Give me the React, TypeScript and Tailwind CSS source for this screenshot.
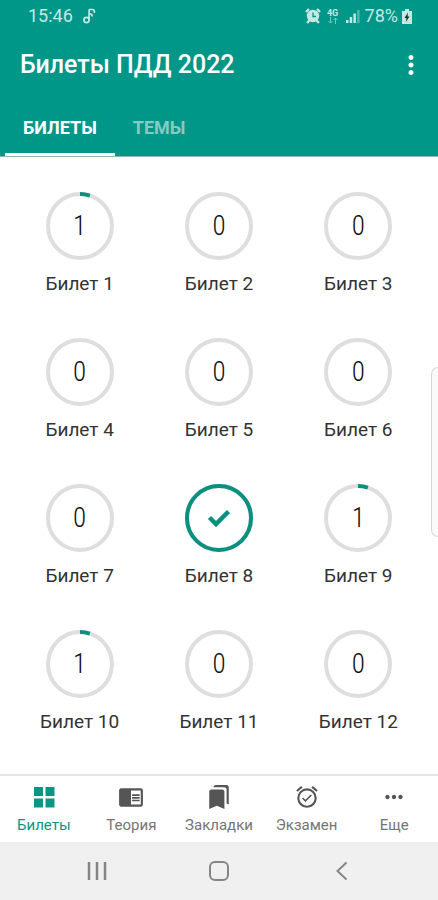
import React, { useState } from 'react';
import {
  MdBookmarks,
  MdChromeReaderMode,
  MdMoreHoriz,
  MdMoreVert,
  MdOutlineAlarmOn,
} from 'react-icons/md';

interface Ticket {
  id: number;
  answered: number;
  done?: boolean;
}

const QUESTIONS_PER_TICKET = 20;

const tickets: Ticket[] = [
  { id: 1, answered: 1 },
  { id: 2, answered: 0 },
  { id: 3, answered: 0 },
  { id: 4, answered: 0 },
  { id: 5, answered: 0 },
  { id: 6, answered: 0 },
  { id: 7, answered: 0 },
  { id: 8, answered: 20, done: true },
  { id: 9, answered: 1 },
  { id: 10, answered: 1 },
  { id: 11, answered: 0 },
  { id: 12, answered: 0 },
];

const GridIcon = () => (
  <svg viewBox="0 0 26 26" className="size-[26px]" fill="currentColor" aria-hidden="true">
    <path d="M3 3h9v9H3zM14.500 3h9v9h-9zM3 14.500h9v9H3zM14.500 14.500h9v9h-9z" />
  </svg>
);

const CheckIcon = () => (
  <svg viewBox="0 0 24 24" className="size-6" fill="none" stroke="#0b8f7e" strokeWidth="4.500" aria-hidden="true">
    <path d="M2.500 11.500l6.500 6.500L21.500 5.500" />
  </svg>
);

const navItems = [
  { label: 'Билеты', icon: <GridIcon /> },
  { label: 'Теория', icon: <MdChromeReaderMode size={26} /> },
  { label: 'Закладки', icon: <MdBookmarks size={26} /> },
  { label: 'Экзамен', icon: <MdOutlineAlarmOn size={26} /> },
  { label: 'Еще', icon: <MdMoreHoriz size={26} /> },
];

const StatusBar = () => (
  <div className="flex h-8 items-center justify-between pl-7 pr-[26px] text-lg leading-8 text-[#c5e8e3]">
    <div className="flex items-center gap-2.5">
      <span>15:46</span>
      <svg viewBox="0 0 14 16" className="h-4 w-3.5" fill="none" stroke="currentColor" strokeWidth="1.700" aria-hidden="true">
        <circle cx="3.500" cy="12" r="2.600" />
        <path d="M6.100 12V1.500M6.100 1.500h3.500c1.500 0 2.200 1.500 1.600 3.500M6.100 5.500c1.600 0 3 1 3.400 3" />
      </svg>
    </div>
    <div className="flex items-center gap-1">
      <svg viewBox="0 0 16 16" className="size-4" aria-hidden="true">
        <path d="M1 4l3-3M15 4l-3-3M2 15l3-3M14 15l-3-3" stroke="currentColor" strokeWidth="2.400" />
        <circle cx="8" cy="8" r="6.200" fill="currentColor" />
        <path d="M8 4.500V8.500h3" fill="none" stroke="#009688" strokeWidth="1.300" />
      </svg>
      <span className="flex w-4 flex-col items-center text-[9px] font-bold leading-[8px]">
        4G
        <svg viewBox="0 0 12 7" className="h-[7px] w-3 opacity-60" fill="none" stroke="currentColor" aria-hidden="true">
          <path d="M3.500 0v6M1.500 4l2 2 2-2M8.500 7V1M6.500 3l2-2 2 2" />
        </svg>
      </span>
      <svg viewBox="0 0 16 16" className="size-4" fill="currentColor" aria-hidden="true">
        <path d="M1 12h2.500v3H1zM4.700 9h2.500v6H4.700zM8.400 5.500h2.500V15H8.400z" />
        <path d="M12.100 2h2.500v13h-2.500z" opacity=".4" />
      </svg>
      <span>78%</span>
      <svg viewBox="0 0 10 15" className="h-[15px] w-2.5" aria-hidden="true">
        <path d="M3 0h4v2h3v13H0V2h3z" fill="currentColor" />
        <path d="M6 3.500L2.500 9h2l-.700 4L7.500 7.500h-2z" fill="#12312e" />
      </svg>
    </div>
  </div>
);

const TicketRing: React.FC<{ ticket: Ticket }> = ({ ticket }) => {
  const share = (ticket.answered / QUESTIONS_PER_TICKET) * 100;

  return (
    <span className="grid size-[68px] place-items-center">
      <svg viewBox="0 0 68 68" className="col-start-1 row-start-1 size-full -rotate-90" fill="none" strokeWidth="4" aria-hidden="true">
        <circle cx="34" cy="34" r="32" stroke="#dedede" />
        {share > 0 && (
          <circle cx="34" cy="34" r="32" stroke="#0b8f7e" pathLength={100} strokeDasharray={`${share} 100`} />
        )}
      </svg>
      <span className="col-start-1 row-start-1 font-['Roboto_Condensed','Liberation_Sans_Narrow',Roboto,sans-serif] text-[27px] font-light leading-8 text-[#111]">
        {ticket.done ? <CheckIcon /> : ticket.answered}
      </span>
    </span>
  );
};

export default function App() {
  const [tab, setTab] = useState('Билеты');
  const [section, setSection] = useState('Билеты');

  return (
    <div className="relative flex min-h-screen flex-col bg-white font-[Roboto,sans-serif]">
      <header className="border-b border-[#8fb5b0] bg-[#009688] text-white">
        <StatusBar />
        <div className="flex h-[66px] items-center justify-between pl-5 pr-3">
          <h1 className="text-[25px] font-medium leading-8">Билеты ПДД 2022</h1>
          <button type="button" aria-label="Меню">
            <MdMoreVert size={30} />
          </button>
        </div>
        <div role="tablist" className="flex h-[58px] pl-[5px]">
          {['Билеты', 'Темы'].map(name => (
            <button
              key={name}
              type="button"
              role="tab"
              aria-selected={tab === name}
              onClick={() => setTab(name)}
              className={`border-b-[3px] px-[18px] pt-1 text-lg font-bold uppercase ${tab === name ? 'border-white text-white' : 'border-transparent text-[#84cbc4]'}`}
            >
              {name}
            </button>
          ))}
        </div>
      </header>

      <main className="grid flex-1 grid-cols-3 content-start gap-y-9 px-2.5 pt-[35px]">
        {tickets.map(ticket => (
          <button key={ticket.id} type="button" className="flex flex-col items-center gap-1.5">
            <TicketRing ticket={ticket} />
            <span className="text-[19px] leading-9 text-[#333]">Билет {ticket.id}</span>
          </button>
        ))}
      </main>

      {/* edge panel handle */}
      <div className="absolute right-0 top-[367px] h-[170px] w-[7px] rounded-l-lg border border-r-0 border-[#d6d6d6] bg-[#fafafa]" />

      <nav className="grid h-[68px] grid-cols-5 border-t-2 border-[#e6e6e6]">
        {navItems.map(item => (
          <button
            key={item.label}
            type="button"
            onClick={() => setSection(item.label)}
            className={`flex flex-col items-center gap-[5px] pt-2 text-[15px] leading-5 ${section === item.label ? 'text-[#0b9584]' : 'text-[#757575] [&>svg]:text-[#555]'}`}
          >
            {item.icon}
            {item.label}
          </button>
        ))}
      </nav>

      <div className="flex h-[58px] items-center justify-around bg-[#f0f0f0] px-9 text-[#858585]">
        <button type="button" aria-label="Недавние">
          <svg viewBox="0 0 20 20" className="size-5" fill="none" stroke="currentColor" strokeWidth="2.500">
            <path d="M2 1v18M10 1v18M18 1v18" />
          </svg>
        </button>
        <button type="button" aria-label="Домой">
          <svg viewBox="0 0 20 20" className="size-5" fill="none" stroke="currentColor" strokeWidth="2">
            <rect x="1" y="1" width="18" height="18" rx="5" />
          </svg>
        </button>
        <button type="button" aria-label="Назад">
          <svg viewBox="0 0 20 20" className="size-5" fill="none" stroke="currentColor" strokeWidth="2">
            <path d="M15.500 1.500L6.500 10l9 8.500" />
          </svg>
        </button>
      </div>
    </div>
  );
}
